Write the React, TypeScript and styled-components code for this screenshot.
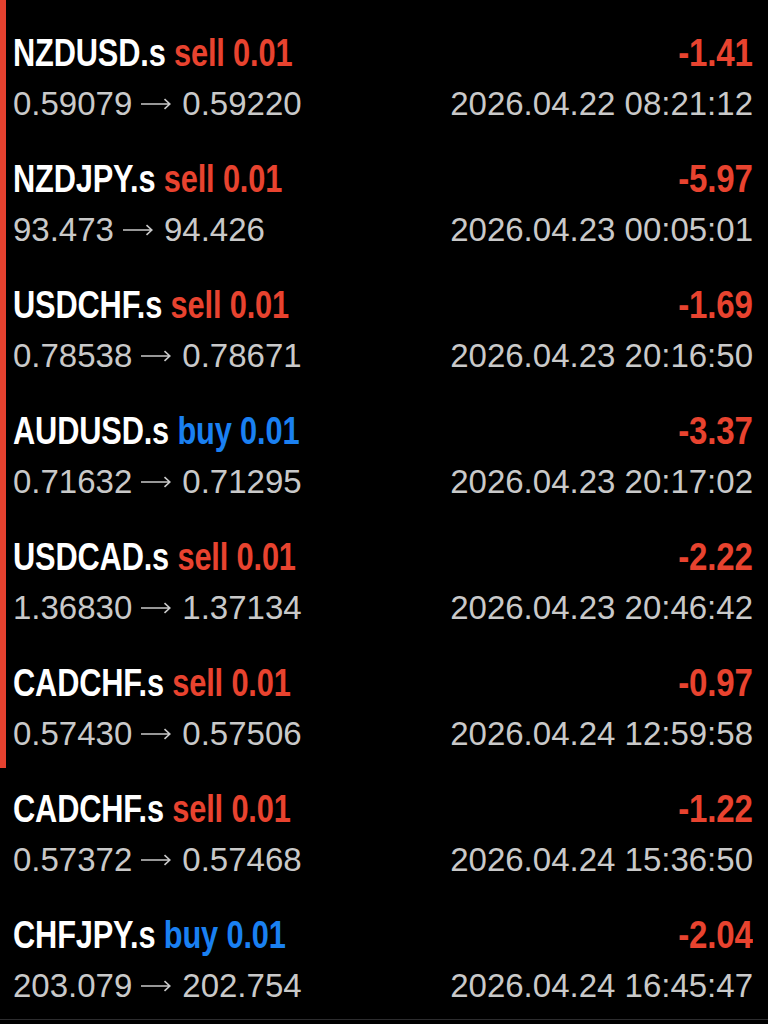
import React from "react";
import styled, { createGlobalStyle } from "styled-components";

const GlobalStyle = createGlobalStyle`
  html, body {
    margin: 0;
    padding: 0;
    background: #000;
  }
  body {
    font-family: "Liberation Sans", Arial, sans-serif;
    -webkit-font-smoothing: antialiased;
  }
`;

const Screen = styled.div`
  width: 768px;
  height: 1024px;
  overflow: hidden;
  background: #000;
  display: flex;
  flex-direction: column;
`;

const Group = styled.div<{ marked: boolean }>`
  display: flex;
  flex-direction: column;
  padding-top: ${({ marked }) => (marked ? "12px" : "0")};
  box-shadow: ${({ marked }) => (marked ? "inset 6px 0 0 #e5412f" : "none")};
`;

const Row = styled.div<{ last?: boolean }>`
  height: 126px;
  box-sizing: border-box;
  padding: 0 15px 0 13px;
  display: flex;
  flex-direction: column;
  border-bottom: ${({ last }) => (last ? "1px solid #2c2c2e" : "none")};
`;

const Line = styled.div`
  display: flex;
  justify-content: space-between;
  align-items: baseline;
  white-space: nowrap;
`;

const TitleLine = styled(Line)`
  margin-top: 19px;
  font-family: "Liberation Sans", Arial, sans-serif;
  font-weight: 700;
  font-size: 38px;
  line-height: 44px;
  letter-spacing: -0.2px;
`;

// the app uses a condensed face; squeeze the regular bold one
const Narrow = styled.span<{ align: "left" | "right"; squeeze?: number }>`
  display: inline-block;
  transform: scaleX(${({ squeeze }) => squeeze ?? 0.81});
  transform-origin: ${({ align }) => align} center;
`;

const Symbol = styled.span`
  color: #fff;
`;

const Side = styled.span<{ kind: "buy" | "sell" }>`
  color: ${({ kind }) => (kind === "buy" ? "#1a80f2" : "#e8432f")};
`;

const Profit = styled(Narrow)`
  color: #e8432f;
`;

const InfoLine = styled(Line)`
  margin-top: 9px;
  font-family: "Liberation Sans", Arial, sans-serif;
  font-size: 33px;
  line-height: 40px;
  color: #c9c9c9;
`;

const Arrow = styled.svg`
  width: 30px;
  height: 12px;
  margin: 0 11px 0 9px;
  vertical-align: 5.5px;
`;

type Deal = {
  symbol: string;
  side: "buy" | "sell";
  volume: string;
  open: string;
  close: string;
  profit: string;
  time: string;
};

const marked: Deal[] = [
  { symbol: "NZDUSD.s", side: "sell", volume: "0.01", open: "0.59079", close: "0.59220", profit: "-1.41", time: "2026.04.22 08:21:12" },
  { symbol: "NZDJPY.s", side: "sell", volume: "0.01", open: "93.473", close: "94.426", profit: "-5.97", time: "2026.04.23 00:05:01" },
  { symbol: "USDCHF.s", side: "sell", volume: "0.01", open: "0.78538", close: "0.78671", profit: "-1.69", time: "2026.04.23 20:16:50" },
  { symbol: "AUDUSD.s", side: "buy", volume: "0.01", open: "0.71632", close: "0.71295", profit: "-3.37", time: "2026.04.23 20:17:02" },
  { symbol: "USDCAD.s", side: "sell", volume: "0.01", open: "1.36830", close: "1.37134", profit: "-2.22", time: "2026.04.23 20:46:42" },
  { symbol: "CADCHF.s", side: "sell", volume: "0.01", open: "0.57430", close: "0.57506", profit: "-0.97", time: "2026.04.24 12:59:58" },
];

const rest: Deal[] = [
  { symbol: "CADCHF.s", side: "sell", volume: "0.01", open: "0.57372", close: "0.57468", profit: "-1.22", time: "2026.04.24 15:36:50" },
  { symbol: "CHFJPY.s", side: "buy", volume: "0.01", open: "203.079", close: "202.754", profit: "-2.04", time: "2026.04.24 16:45:47" },
];

const DealRow: React.FC<{ deal: Deal; last?: boolean }> = ({ deal, last }) => (
  <Row last={last}>
    <TitleLine>
      <Narrow align="left">
        <Symbol>{deal.symbol}</Symbol>{" "}
        <Side kind={deal.side}>
          {deal.side} {deal.volume}
        </Side>
      </Narrow>
      <Profit align="right" squeeze={0.87}>
        {deal.profit}
      </Profit>
    </TitleLine>
    <InfoLine>
      <span>
        {deal.open}
        <Arrow viewBox="0 0 30 12" aria-label="→">
          <path
            d="M0 6 H28.5 M23.5 1.2 L28.8 6 L23.5 10.8"
            fill="none"
            stroke="#c9c9c9"
            strokeWidth="1.6"
          />
        </Arrow>
        {deal.close}
      </span>
      <span>{deal.time}</span>
    </InfoLine>
  </Row>
);

export default function App() {
  return (
    <Screen>
      <GlobalStyle />
      <Group marked>
        {marked.map((d) => (
          <DealRow key={d.time} deal={d} />
        ))}
      </Group>
      <Group marked={false}>
        {rest.map((d, i) => (
          <DealRow key={d.time} deal={d} last={i === rest.length - 1} />
        ))}
      </Group>
    </Screen>
  );
}
